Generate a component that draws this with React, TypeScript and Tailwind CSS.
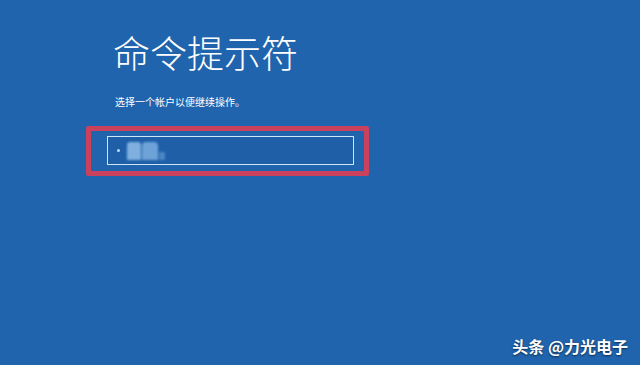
export default function App() {
  return (
    <div
      className="relative w-[640px] h-[365px] overflow-hidden bg-[#2064ae] text-white"
      style={{ fontFamily: '"Noto Sans CJK SC", "Noto Sans", sans-serif' }}
    >
      <div className="pl-[113px] pt-[25px]">
        <h1 className="text-[37px] leading-[54px] font-light">命令提示符</h1>
        <p className="mt-[16px] pl-[2px] text-[10px] leading-[13px]">选择一个帐户以便继续操作。</p>
      </div>

      {/* account list, highlighted */}
      <div className="ml-[86px] mt-[18px] w-[283px] h-[50px] border-[5px] border-[#c9415d] rounded-[2px] pl-[16px] pt-[5px]">
        <div className="w-[247px] h-[29px] border border-[#cfe6f5] bg-[#1e5fa8] flex items-center pl-[9px] gap-[7px]">
          <span className="w-[3px] h-[3px] rounded-full bg-[#b9dcf5]" />
          <div className="flex items-end gap-[1px] blur-[1px]">
            <span className="w-[14px] h-[18px] bg-[#7fb0e0] rounded-t-[3px]" />
            <span className="w-[16px] h-[18px] bg-[#6ea3d8] rounded-t-[4px]" />
            <span className="w-[6px] h-[8px] bg-[#4b86c6]" />
          </div>
        </div>
      </div>

      <div
        className="absolute right-[12px] bottom-[8px] text-[16px] leading-[22px] font-bold"
        style={{ textShadow: '0 1px 2px rgba(0,0,0,0.6)' }}
      >
        头条 @力光电子
      </div>
    </div>
  );
}
